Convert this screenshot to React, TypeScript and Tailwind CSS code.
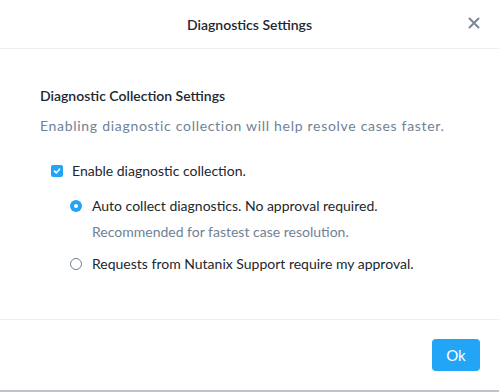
import React, { useState } from 'react';

const App: React.FC = () => {
  const [enabled, setEnabled] = useState(true);
  const [mode, setMode] = useState<'auto' | 'approval'>('auto');

  return (
    <div className="w-[499px] h-[392px] bg-white flex flex-col font-['Lato',sans-serif] text-[#22272e] border-b-2 border-[#bfc3c7] rounded-tl-[3px] overflow-hidden">
      {/* Header */}
      <div className="relative h-[49px] flex items-center justify-center border-b border-[#eceef0] shrink-0">
        <span className="text-[14px] font-semibold">Diagnostics Settings</span>
        <button className="absolute right-[19px] top-[17px] text-[#7a8798]">
          <svg width="12" height="12" viewBox="0 0 12 12" fill="none" stroke="currentColor" strokeWidth="2" strokeLinecap="round">
            <path d="M1.5 1.5 L10.5 10.5 M10.5 1.5 L1.5 10.5" />
          </svg>
        </button>
      </div>

      {/* Body */}
      <div className="flex-1 px-10 pt-[38px]">
        <h3 className="text-[14px] font-semibold leading-[18px]">Diagnostic Collection Settings</h3>
        <p className="mt-[12px] text-[14px] leading-[18px] tracking-[0.7px] text-[#6f8296]">
          Enabling diagnostic collection will help resolve cases faster.
        </p>

        <label className="mt-[27px] ml-[11px] flex items-center gap-[9px] cursor-pointer">
          <span
            onClick={() => setEnabled(!enabled)}
            className="w-[12px] h-[12px] rounded-[2px] bg-[#22a5f7] flex items-center justify-center"
          >
            {enabled && (
              <svg width="8" height="8" viewBox="0 0 8 8" fill="none" stroke="white" strokeWidth="1.6" strokeLinecap="round" strokeLinejoin="round">
                <path d="M1.5 4.2 L3.3 5.9 L6.5 2.2" />
              </svg>
            )}
          </span>
          <span className="text-[14px] leading-[18px]">Enable diagnostic collection.</span>
        </label>

        <div className="ml-[30px] mt-[17px]">
          <label className="flex items-center gap-[10px] cursor-pointer" onClick={() => setMode('auto')}>
            <span
              className={
                mode === 'auto'
                  ? 'w-[12px] h-[12px] rounded-full bg-[#22a5f7] flex items-center justify-center'
                  : 'w-[12px] h-[12px] rounded-full border border-[#6f7f92]'
              }
            >
              {mode === 'auto' && <span className="w-[4px] h-[4px] rounded-full bg-white" />}
            </span>
            <span className="text-[14px] leading-[18px]">Auto collect diagnostics. No approval required.</span>
          </label>
          <p className="ml-[22px] mt-[8px] text-[14px] leading-[18px] text-[#6f8296]">
            Recommended for fastest case resolution.
          </p>
          <label className="mt-[14px] flex items-center gap-[10px] cursor-pointer" onClick={() => setMode('approval')}>
            <span
              className={
                mode === 'approval'
                  ? 'w-[12px] h-[12px] rounded-full bg-[#22a5f7] flex items-center justify-center'
                  : 'w-[12px] h-[12px] rounded-full border border-[#6f7f92]'
              }
            >
              {mode === 'approval' && <span className="w-[4px] h-[4px] rounded-full bg-white" />}
            </span>
            <span className="text-[14px] leading-[18px]">Requests from Nutanix Support require my approval.</span>
          </label>
        </div>
      </div>

      {/* Footer */}
      <div className="h-[71px] shrink-0 border-t border-[#eceef0] flex items-start justify-end pt-[19px] pr-[19px]">
        <button className="w-[48px] h-[32px] rounded-[4px] bg-[#22a5f7] text-white text-[15px]">Ok</button>
      </div>
    </div>
  );
};

export default App;
